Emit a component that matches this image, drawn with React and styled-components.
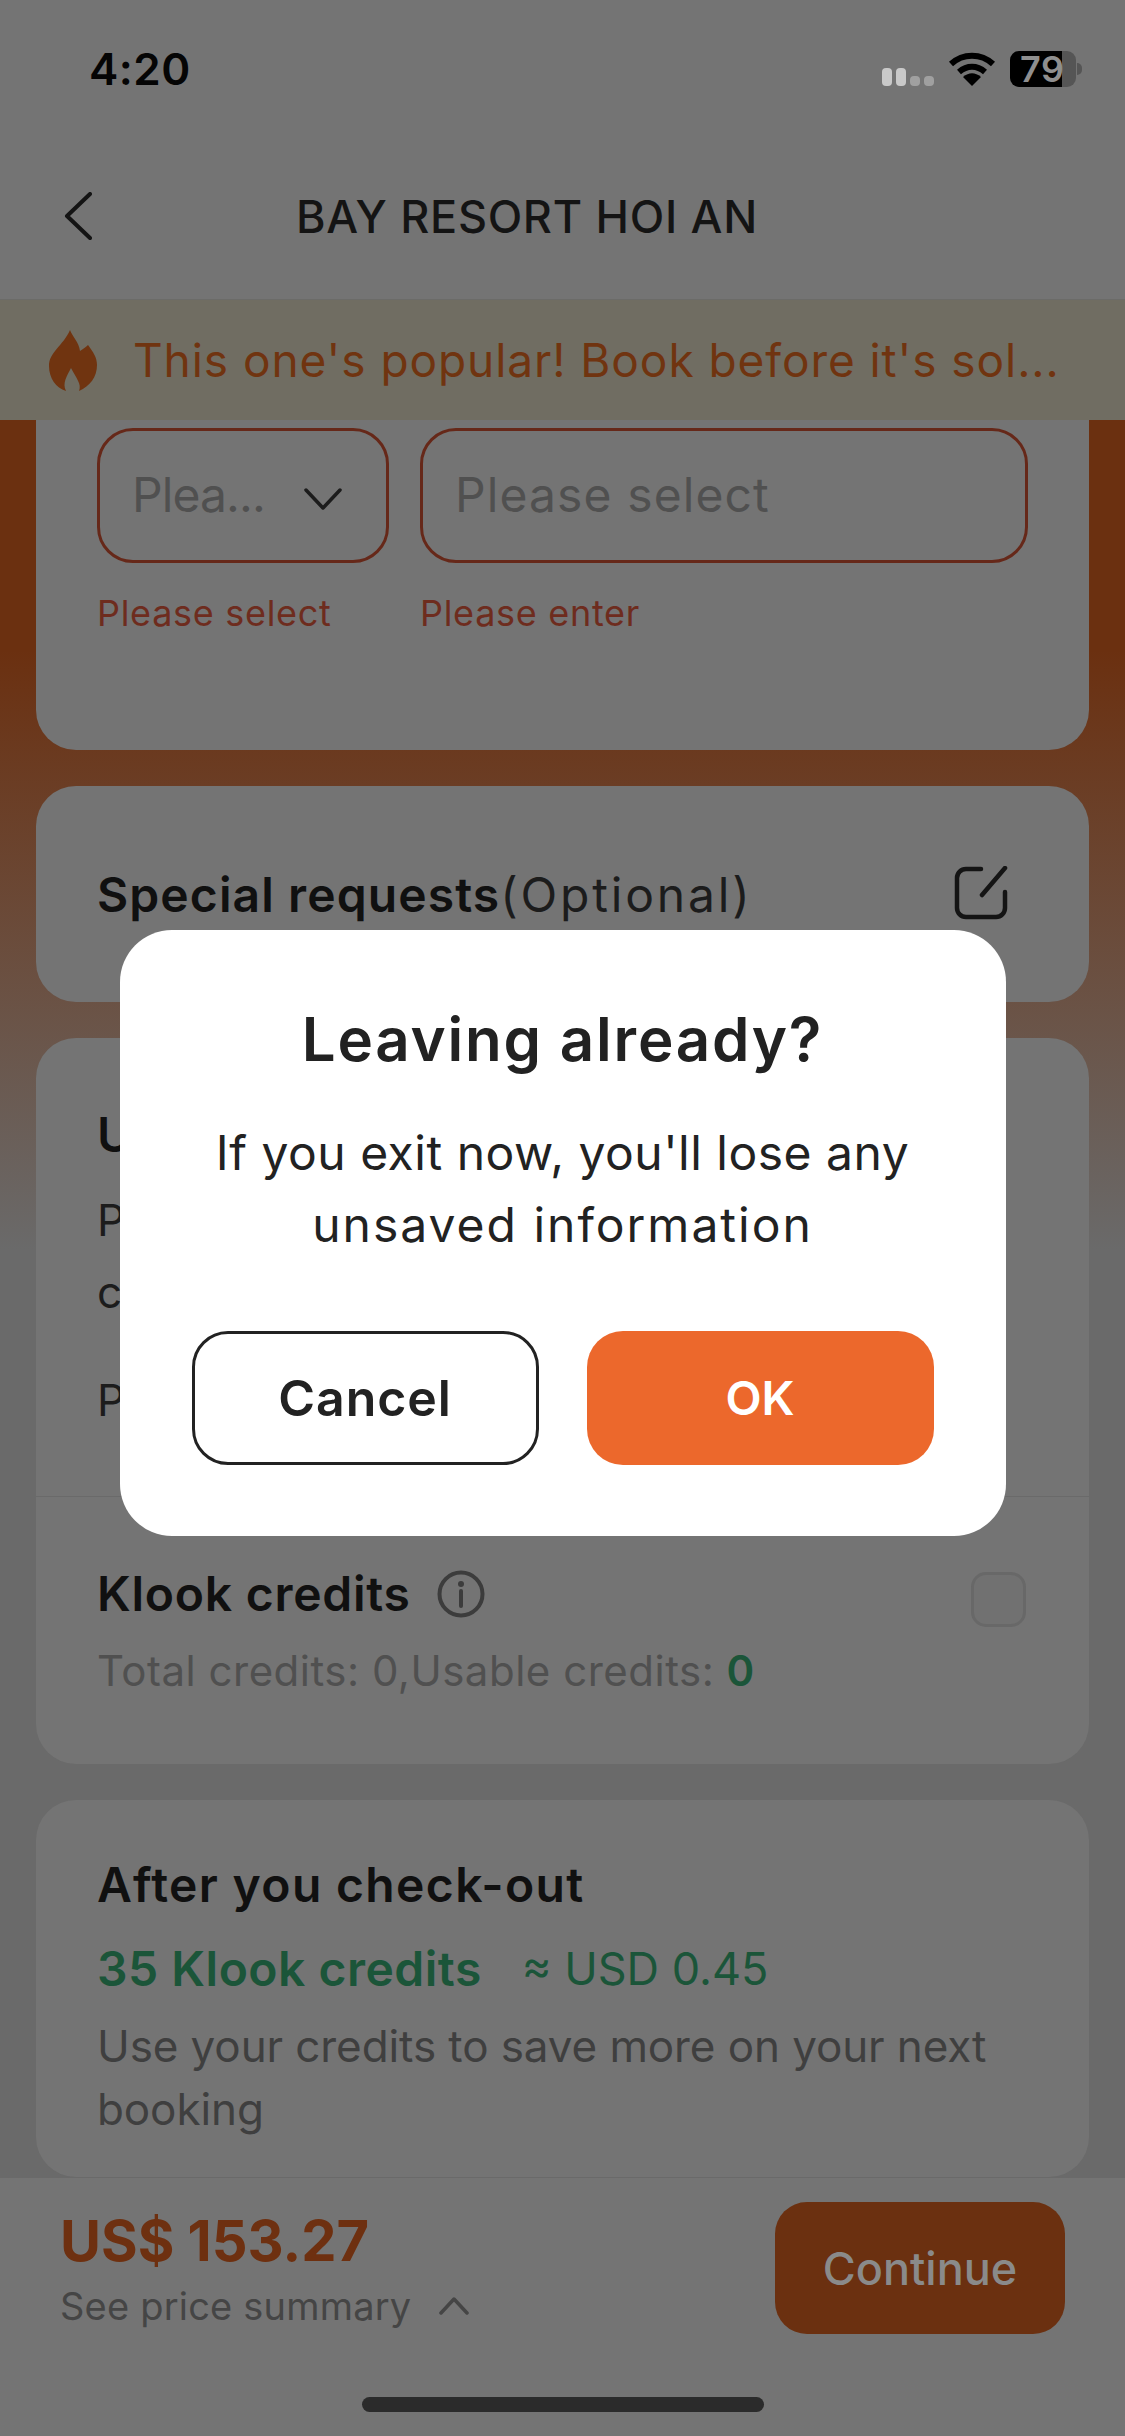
import React from 'react'
import styled, { createGlobalStyle } from 'styled-components'

const GlobalStyle = createGlobalStyle`
  html, body {
    margin: 0;
    padding: 0;
    background: #747474;
  }
  * {
    box-sizing: border-box;
  }
`

const Screen = styled.div`
  position: relative;
  display: flex;
  flex-direction: column;
  width: 1125px;
  height: 2436px;
  overflow: hidden;
  background: #747474;
  color: #141414;
  font-family: Inter, "Liberation Sans", sans-serif;
`

const Header = styled.header`
  height: 300px;
  flex: none;
  border-bottom: 1px solid #6b6b68;
`

const StatusBar = styled.div`
  display: flex;
  align-items: center;
  justify-content: space-between;
  height: 138px;
  padding: 0 49px 0 89px;
`

const Time = styled.span`
  font-size: 44px;
  font-weight: 600;
  letter-spacing: 0.5px;
  color: #050505;
`

const StatusIcons = styled.div`
  display: flex;
  align-items: center;
  gap: 14px;
`

const SignalBars = styled.div`
  display: flex;
  align-items: flex-end;
  gap: 4px;
  height: 18px;
  margin-top: 16px;
`

const Bar = styled.span`
  width: 10px;
  height: ${p => (p.$on ? 18 : 10)}px;
  border-radius: 4px;
  background: ${p => (p.$on ? '#c9c9c9' : '#a0a0a0')};
`

const Battery = styled.div`
  position: relative;
  display: flex;
  align-items: center;
  width: 66px;
  height: 36px;
  border-radius: 9px;
  background: linear-gradient(90deg, #000 0 52px, #555 52px);
  font-size: 36px;
  font-weight: 600;
  color: #8f8f8f;
  padding-left: 10px;
  letter-spacing: 0.5px;
  &::after {
    content: '';
    position: absolute;
    right: -6px;
    top: 12px;
    width: 5px;
    height: 12px;
    border-radius: 0 6px 6px 0;
    background: #555;
  }
`

const Nav = styled.nav`
  display: flex;
  align-items: center;
  height: 156px;
  padding-left: 64px;
`

const Title = styled.h1`
  margin: 0 0 0 204px;
  font-size: 45px;
  font-weight: 500;
  letter-spacing: 0.7px;
  color: #141414;
`

const Banner = styled.div`
  display: flex;
  flex: none;
  align-items: center;
  gap: 36px;
  height: 120px;
  padding: 0 0 0 49px;
  background: #706d62;
`

const BannerText = styled.span`
  white-space: nowrap;
  font-size: 46px;
  letter-spacing: 0.93px;
  color: #703410;
`

const Scroller = styled.main`
  display: flex;
  flex: 1;
  flex-direction: column;
  gap: 36px;
  min-height: 0;
  overflow: hidden;
  padding: 0 36px;
  background: linear-gradient(180deg, #6b3010 0, #6b3010 230px, #6a6a6a 830px);
`

const Card = styled.section`
  flex: none;
  border-radius: ${p => (p.$clipped ? '0 0 40px 40px' : '40px')};
  background: #747474;
`

const FormCard = styled(Card)`
  padding: 8px 61px 112px;
`

const Fields = styled.div`
  display: grid;
  grid-template-columns: 292px 608px;
  column-gap: 31px;
`

const Field = styled.div`
  display: flex;
  align-items: center;
  height: 135px;
  padding: 0 32px 2px;
  border: 3px solid #662819;
  border-radius: 36px;
  font-size: 48px;
  letter-spacing: 1.1px;
  color: #505050;
`

const Placeholder = styled.span`
  flex: 1;
  white-space: nowrap;
`

const SelectValue = styled(Placeholder)`
  letter-spacing: -0.9px;
`

const FieldError = styled.div`
  margin-top: 25px;
  font-size: 36px;
  line-height: 50px;
  letter-spacing: 0.7px;
  color: #6e2c1e;
`

const RequestsCard = styled(Card)`
  display: flex;
  align-items: center;
  justify-content: space-between;
  height: 216px;
  padding: 78px 81px 76px 61px;
`

const CardTitle = styled.h2`
  margin: 0;
  font-size: 48px;
  line-height: 60px;
  font-weight: 600;
  letter-spacing: ${p => p.$spacing ?? 1.1}px;
  color: #101010;
`

const Optional = styled.span`
  font-weight: 400;
  letter-spacing: 2.8px;
  color: #1c1c1c;
`

const EditIcon = styled.svg`
  width: 54px;
  height: 54px;
  margin-bottom: 4px;
`

const CreditsTop = styled.div`
  padding: 67px 61px 60px;
`

const BodyText = styled.p`
  margin: ${p => p.$top || 0}px 0 0;
  font-size: 44px;
  line-height: 72px;
  color: #1c1c1c;
`

const Divider = styled.hr`
  margin: 0;
  border: 0;
  border-top: 1px solid #6a6a6a;
`

const CreditsBottom = styled.div`
  padding: 67px 63px 65px 61px;
`

const TitleRow = styled.div`
  display: flex;
  align-items: center;
  gap: 26px;
  height: 60px;
`

const InfoIcon = styled.svg`
  width: 48px;
  height: 48px;
`

const Checkbox = styled.span`
  width: 55px;
  height: 55px;
  margin: 10px 0 0 auto;
  border: 3px solid #686868;
  border-radius: 15px;
  background: #717171;
`

const Muted = styled.div`
  margin-top: 19px;
  font-size: 42px;
  line-height: 56px;
  letter-spacing: 0.5px;
  color: #505050;
`

const Green = styled.span`
  font-weight: ${p => (p.$bold ? 600 : 400)};
  color: #1b5539;
`

const Usd = styled(Green)`
  font-size: 45px;
  letter-spacing: 0;
`

const AfterCard = styled(Card)`
  padding: 55px 61px 36px;
`

const EarnRow = styled.div`
  display: flex;
  align-items: center;
  gap: 40px;
  margin-top: 24px;
  font-size: 48px;
  line-height: 60px;
  letter-spacing: 0.5px;
`

const Note = styled.p`
  margin: 16px 0 0;
  font-size: 44px;
  line-height: 63px;
  letter-spacing: -0.1px;
  color: #3f3f3f;
`

const Footer = styled.footer`
  display: flex;
  flex: none;
  flex-direction: column;
  height: 259px;
  border-top: 1px solid #6a6a6a;
  background: #747474;
`

const FooterRow = styled.div`
  display: flex;
  align-items: flex-start;
  justify-content: space-between;
  padding: 24px 60px 0;
`

const PriceBlock = styled.div`
  padding-top: 4px;
`

const Price = styled.div`
  font-size: 56px;
  line-height: 70px;
  font-weight: 700;
  color: #6e3010;
`

const Summary = styled.div`
  display: flex;
  align-items: center;
  gap: 28px;
  margin-top: 3px;
  font-size: 38px;
  line-height: 54px;
  letter-spacing: 0.2px;
  color: #454545;
`

const ContinueButton = styled.button`
  width: 290px;
  height: 132px;
  border: 0;
  border-radius: 32px;
  background: #6b3010;
  font-family: inherit;
  font-size: 45px;
  font-weight: 500;
  color: #8a8a8a;
`

const HomeBar = styled.div`
  align-self: center;
  width: 402px;
  height: 15px;
  margin-top: 63px;
  border-radius: 8px;
  background: #2b2b2b;
`

const Scrim = styled.div`
  position: absolute;
  inset: 0;
  display: flex;
  align-items: center;
  justify-content: center;
  padding-top: 29px;
`

const Modal = styled.div`
  width: 886px;
  height: 606px;
  padding: 71px 72px 0;
  border-radius: 52px;
  background: #fff;
  text-align: center;
  color: #222;
`

const ModalTitle = styled.h3`
  margin: 0;
  font-size: 60px;
  line-height: 76px;
  font-weight: 600;
  letter-spacing: 1.8px;
`

const ModalBody = styled.p`
  margin: 40px 0 0;
  font-size: 48px;
  line-height: 72px;
`

const ModalLine = styled.span`
  display: block;
  white-space: nowrap;
  letter-spacing: ${p => p.$spacing}px;
`

const ModalActions = styled.div`
  display: grid;
  grid-template-columns: 1fr 1fr;
  column-gap: 48px;
  margin-top: 70px;
`

const ModalButton = styled.button`
  height: 134px;
  border: ${p => (p.$primary ? '0' : '3px solid #222')};
  border-radius: 36px;
  background: ${p => (p.$primary ? '#ec682c' : '#fff')};
  font-family: inherit;
  font-size: ${p => (p.$primary ? 47 : 50)}px;
  font-weight: 600;
  letter-spacing: ${p => (p.$primary ? 0 : 0.9)}px;
  color: ${p => (p.$primary ? '#fff' : '#222')};
`

function App() {
  return (
    <Screen>
      <GlobalStyle />
      <Header>
        <StatusBar>
          <Time>4:20</Time>
          <StatusIcons>
            <SignalBars>
              <Bar $on />
              <Bar $on />
              <Bar />
              <Bar />
            </SignalBars>
            <svg width="48" height="34" viewBox="0 0 48 34">
              <path d="M3 12C15 1 33 1 45 12" fill="none" stroke="#000" strokeWidth="6" />
              <path d="M11 20C19 13 29 13 37 20" fill="none" stroke="#000" strokeWidth="6" />
              <path d="M24 34L15 25C21 20 27 20 33 25Z" fill="#000" />
            </svg>
            <Battery>79</Battery>
          </StatusIcons>
        </StatusBar>
        <Nav>
          <svg width="28" height="48" viewBox="0 0 28 48">
            <path d="M26 2L3 24L26 46" fill="none" stroke="#141414" strokeWidth="4" strokeLinecap="round" strokeLinejoin="round" />
          </svg>
          <Title>BAY RESORT HOI AN</Title>
        </Nav>
      </Header>

      <Banner>
        <svg width="48" height="64" viewBox="0 0 48 64" style={{ flex: 'none' }}>
          <path d="M21 2C23 8 30 14 31 23C34 21 37 19 39 17C44 24 48 29 48 37C48 49 41 58 30 63C33 56 27 50 22 40C18 48 13 55 17 63C7 60 0 50 0 38C0 24 14 18 21 2Z" fill="#703410" />
        </svg>
        <BannerText>This one's popular! Book before it's sol...</BannerText>
      </Banner>

      <Scroller>
        <FormCard $clipped>
          <Fields>
            <div>
              <Field>
                <SelectValue>Plea...</SelectValue>
                <svg width="38" height="22" viewBox="0 0 38 22" style={{ flex: 'none', marginRight: 12, marginTop: 8 }}>
                  <path d="M2 2L19 20L36 2" fill="none" stroke="#1c1c1c" strokeWidth="3.5" strokeLinecap="round" strokeLinejoin="round" />
                </svg>
              </Field>
              <FieldError>Please select</FieldError>
            </div>
            <div>
              <Field>
                <Placeholder>Please select</Placeholder>
              </Field>
              <FieldError>Please enter</FieldError>
            </div>
          </Fields>
        </FormCard>

        <RequestsCard>
          <CardTitle>
            Special requests<Optional>(Optional)</Optional>
          </CardTitle>
          <EditIcon viewBox="0 0 54 54">
            <path d="M27 3H12a9 9 0 0 0-9 9V42a9 9 0 0 0 9 9H42a9 9 0 0 0 9-9V26M51 2L28 29" fill="none" stroke="#141414" strokeWidth="4.5" strokeLinecap="round" />
          </EditIcon>
        </RequestsCard>

        <Card>
          <CreditsTop>
            <CardTitle>Use promo code</CardTitle>
            <BodyText $top={19}>Promo codes can be applied on<br />checkout</BodyText>
            <BodyText $top={36}>Promo code</BodyText>
          </CreditsTop>
          <Divider />
          <CreditsBottom>
            <TitleRow>
              <CardTitle $spacing={0.75}>Klook credits</CardTitle>
              <InfoIcon viewBox="0 0 48 48">
                <circle cx="24" cy="24" r="21.5" fill="none" stroke="#3c3c3c" strokeWidth="4" />
                <circle cx="24" cy="14" r="3" fill="#3c3c3c" />
                <path d="M24 21V36" stroke="#3c3c3c" strokeWidth="4" strokeLinecap="round" />
              </InfoIcon>
              <Checkbox />
            </TitleRow>
            <Muted>
              Total credits: 0,Usable credits: <Green $bold>0</Green>
            </Muted>
          </CreditsBottom>
        </Card>

        <AfterCard>
          <CardTitle $spacing={1.35}>After you check-out</CardTitle>
          <EarnRow>
            <Green $bold>35 Klook credits</Green>
            <Usd>≈ USD 0.45</Usd>
          </EarnRow>
          <Note>
            Use your credits to save more on your next booking
          </Note>
        </AfterCard>
      </Scroller>

      <Footer>
        <FooterRow>
          <PriceBlock>
            <Price>US$ 153.27</Price>
            <Summary>
              See price summary
              <svg width="30" height="18" viewBox="0 0 30 18">
                <path d="M2 16L15 2L28 16" fill="none" stroke="#454545" strokeWidth="3.5" strokeLinecap="round" strokeLinejoin="round" />
              </svg>
            </Summary>
          </PriceBlock>
          <ContinueButton>Continue</ContinueButton>
        </FooterRow>
        <HomeBar />
      </Footer>

      <Scrim>
        <Modal>
          <ModalTitle>Leaving already?</ModalTitle>
          <ModalBody>
            <ModalLine $spacing={0.5}>If you exit now, you'll lose any</ModalLine>
            <ModalLine $spacing={2}>unsaved information</ModalLine>
          </ModalBody>
          <ModalActions>
            <ModalButton>Cancel</ModalButton>
            <ModalButton $primary>OK</ModalButton>
          </ModalActions>
        </Modal>
      </Scrim>
    </Screen>
  )
}

export default App
